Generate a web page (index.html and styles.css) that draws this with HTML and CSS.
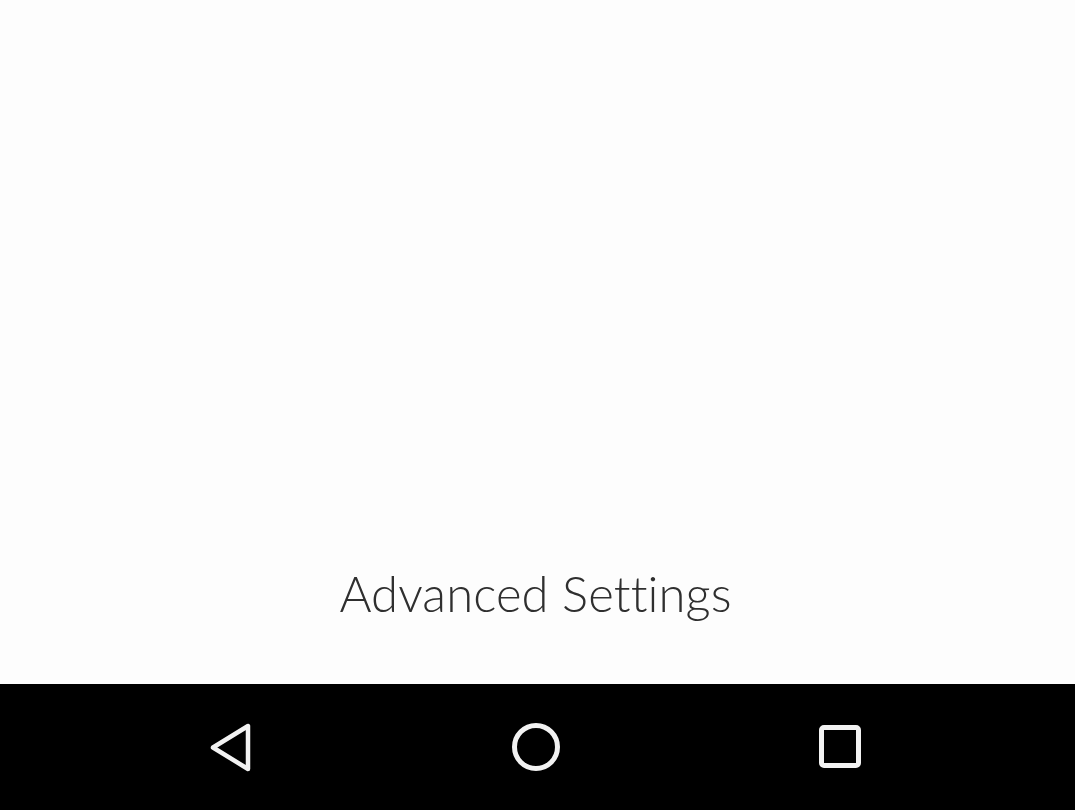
FILE: index.html
```html
<!DOCTYPE html>
<html>
<head>
<meta charset="utf-8">
<link rel="stylesheet" href="styles.css">
</head>
<body>
<div class="screen">
  <main class="content">
    <div class="label">Advanced Settings</div>
  </main>
  <nav class="navbar">
    <button class="navbtn" aria-label="Back">
      <svg width="50" height="50" viewBox="0 0 50 50"><path d="M41 4 L41 47 L6 25.5 Z" fill="none" stroke="#f2f2f2" stroke-width="4.5" stroke-linejoin="round"/></svg>
    </button>
    <button class="navbtn" aria-label="Home">
      <svg width="50" height="50" viewBox="0 0 50 50"><circle cx="25" cy="25" r="21.5" fill="none" stroke="#f2f2f2" stroke-width="5"/></svg>
    </button>
    <button class="navbtn" aria-label="Recents">
      <svg width="50" height="50" viewBox="0 0 50 50"><rect x="6.5" y="5.5" width="37" height="38" rx="2.5" fill="none" stroke="#f2f2f2" stroke-width="5"/></svg>
    </button>
  </nav>
</div>
</body>
</html>
```
FILE: styles.css
```css
html, body {
  margin: 0;
  padding: 0;
}
body {
  width: 1075px;
  height: 810px;
  overflow: hidden;
  background: #fdfdfd;
}
.screen {
  display: flex;
  flex-direction: column;
  height: 810px;
}
.content {
  flex: 1;
  display: flex;
  flex-direction: column;
  justify-content: flex-end;
  align-items: center;
  background: #fdfdfd;
  padding-bottom: 61px;
}
.label {
  font-family: "Lato", "Liberation Sans", sans-serif;
  font-weight: 300;
  font-size: 49px;
  line-height: 60px;
  color: #2f2f2f;
  letter-spacing: 0.1px;
  padding-right: 4px;
}
.navbar {
  height: 126px;
  background: #000;
  display: flex;
  justify-content: center;
  align-items: center;
  gap: 254px;
  padding-right: 4px;
}
.navbtn {
  background: none;
  border: 0;
  padding: 0;
  display: flex;
  justify-content: center;
  align-items: center;
  width: 50px;
  height: 50px;
}
.navbtn svg { display: block; }
```
